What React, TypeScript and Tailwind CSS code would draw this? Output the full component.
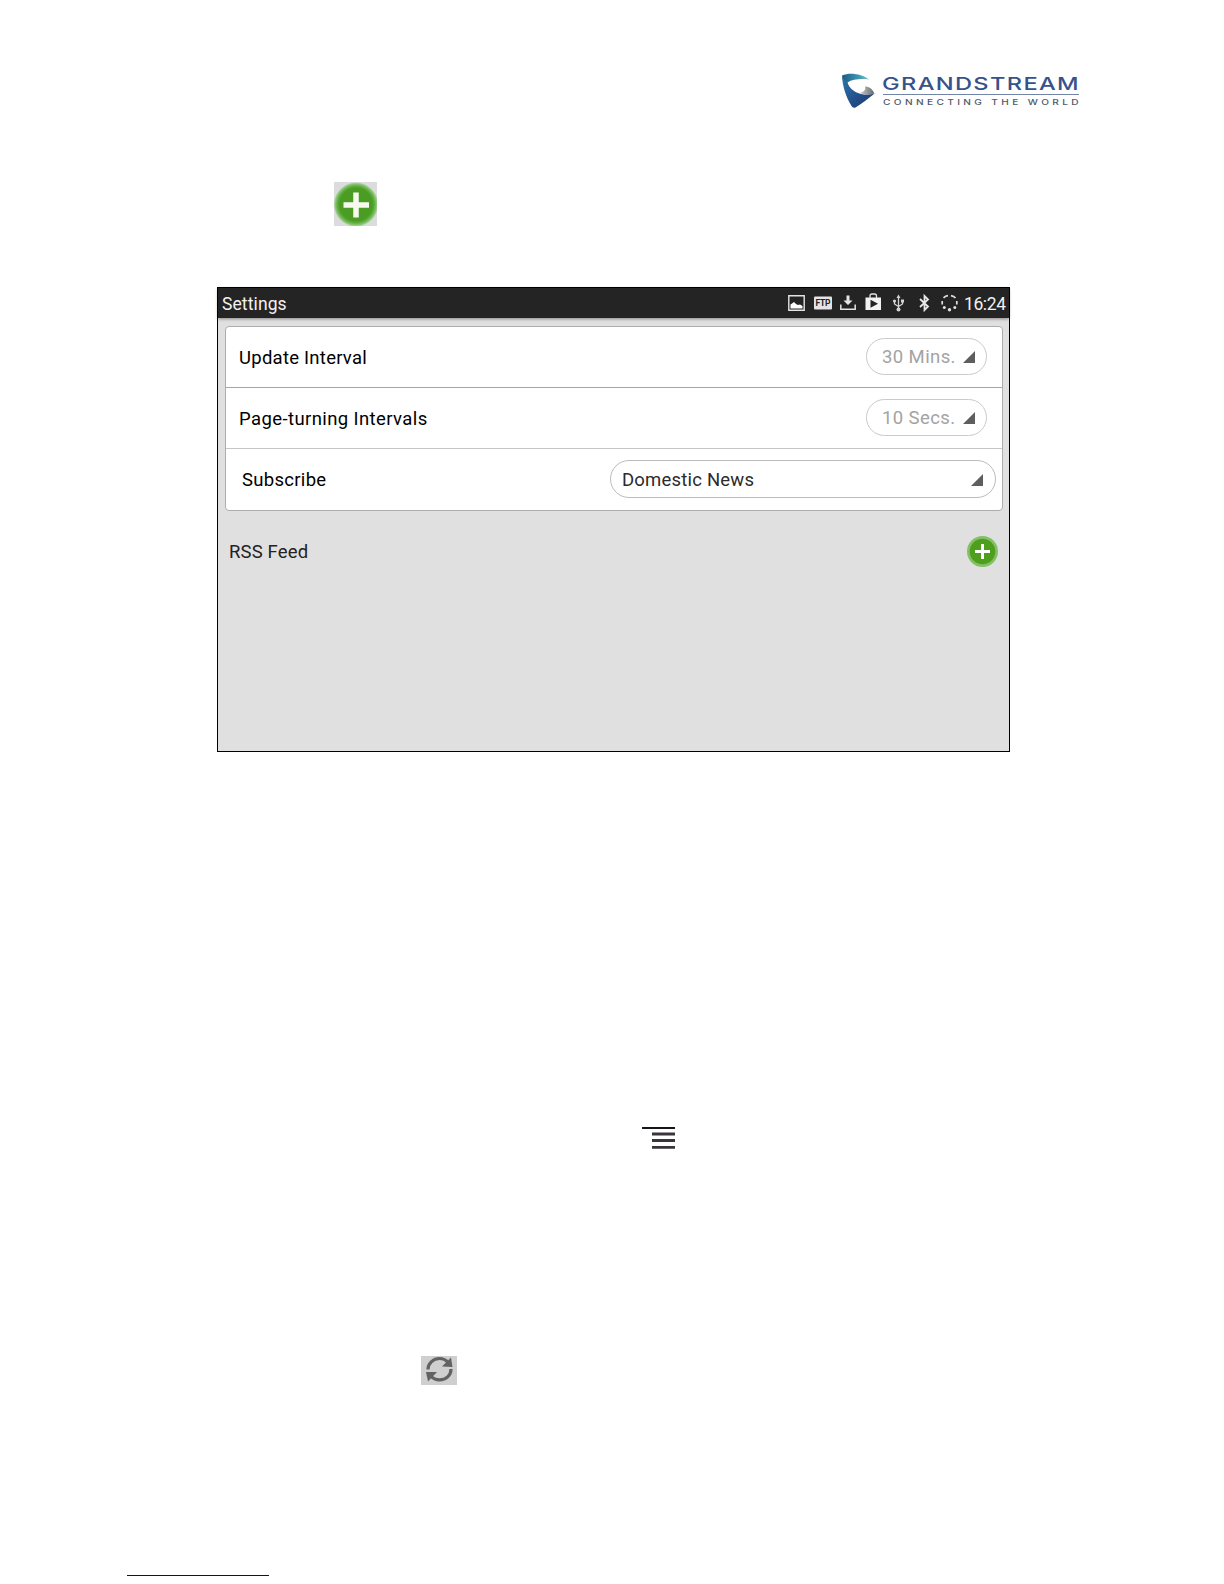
import type { ReactNode } from "react"

function Logo() {
  return (
    <svg width="246" height="50" viewBox="0 -8 246 50" aria-label="Grandstream">
      <defs>
        <linearGradient id="top" x1="0" y1="0" x2="1" y2="0">
          <stop offset="0" stopColor="#1d5a84" />
          <stop offset="0.6" stopColor="#3b97b0" />
          <stop offset="1" stopColor="#7cc0cd" />
        </linearGradient>
        <linearGradient id="body" x1="0" y1="0" x2="1" y2="1">
          <stop offset="0" stopColor="#2c78a8" />
          <stop offset="0.55" stopColor="#23508c" />
          <stop offset="1" stopColor="#1c3768" />
        </linearGradient>
        <linearGradient id="lip" x1="0" y1="0" x2="1" y2="0">
          <stop offset="0" stopColor="#c9c9c9" />
          <stop offset="1" stopColor="#66696c" />
        </linearGradient>
      </defs>
      <path d="M1 2.500C9 -1 21 1 28 6.500C20 5.500 12 6 6.500 9.500C5.500 11 6 14 8 17C4 13.500 1.500 8 1 2.500Z" fill="url(#top)" />
      <path d="M1 3C2 5 4 8 6.500 9.500C8 14.500 12 18 17 20C22 22 28 22 33.500 20.500C28 25 21 30.500 14.500 34.500C12.500 35 11.500 34.500 10.500 33C5 24 1.500 13 1 3Z" fill="url(#body)" />
      <path d="M19 20C22 19 25.500 17 24 13.500C28 13.500 31.500 16 33.500 20.500C29 22 23 22 19 20Z" fill="url(#lip)" />
      <text
        x="41" y="17" textLength="198" lengthAdjust="spacingAndGlyphs"
        className="fill-[#36528a] font-['Inter',sans-serif] text-[17.5px] font-medium tracking-[1px]"
      >
        GRANDSTREAM
      </text>
      <path d="M42 21.500H238" stroke="#7284a8" />
      <text
        x="42" y="32" textLength="199" lengthAdjust="spacingAndGlyphs"
        className="fill-[#4f5968] font-['Inter',sans-serif] text-[7.5px] font-medium tracking-[2.5px]"
      >
        CONNECTING THE WORLD
      </text>
    </svg>
  )
}

function BigPlus() {
  return (
    <svg width="43" height="44" viewBox="0 0 43 44">
      <defs>
        <radialGradient id="green">
          <stop offset="0.74" stopColor="#4b9c22" />
          <stop offset="0.84" stopColor="#61ad43" />
          <stop offset="0.94" stopColor="#8cc878" />
          <stop offset="1" stopColor="#b5d8aa" />
        </radialGradient>
      </defs>
      <path d="M0 0H43V44H0Z" fill="#dcdcde" />
      <circle cx="22" cy="22.5" r="22" fill="url(#green)" />
      <path d="M9.500 23H35M22 10.500V35.500" stroke="#f7f9ee" strokeWidth="5.500" />
    </svg>
  )
}

function SmallPlus() {
  return (
    <svg width="31" height="31" viewBox="0 0 31 31">
      <circle cx="15.5" cy="15.5" r="15.500" fill="#86bf68" />
      <circle cx="15.5" cy="15.5" r="12.800" fill="#4e9f1e" />
      <path d="M8 15.500H23M15.500 8V23" stroke="#fff" strokeWidth="3" />
    </svg>
  )
}

function MenuIcon() {
  return (
    <svg width="33" height="24" viewBox="0 0 33 24">
      <path d="M0 2H33" stroke="#17141a" strokeWidth="2" />
      <path d="M10 8H33M10 14.500H33M10 21.300H33" stroke="#39353b" strokeWidth="2.800" />
    </svg>
  )
}

function RefreshIcon() {
  return (
    <svg width="36" height="29" viewBox="0 0 36 29">
      <path d="M0 0H36V29H0Z" fill="#cfcfcf" />
      <path d="M7 13.500C7 7 12.500 2.500 18.500 2.500C22.500 2.500 25 4 27 6.500M30 13C30 19.500 25 23.800 18.500 23.800C14.500 23.800 12 22.500 10 20" fill="none" stroke="#626262" strokeWidth="3.200" />
      <path d="M30 1.500L31.500 11L21 10.500Z" fill="#626262" />
      <path d="M5 16H16L7 25.500Z" fill="#626262" />
    </svg>
  )
}

function StatusIcons() {
  return (
    <svg width="172" height="20" viewBox="0 0 172 20" fill="none">
      {/* picture */}
      <path d="M0.800 2.800H16.200V17.200H0.800Z" stroke="#e4e4e4" strokeWidth="1.400" />
      <path d="M2.500 15.500V11.500L4 10.500L6 9L8 11L10 12L12 11.500L14.500 13V15.500Z" fill="#fff" />
      {/* ftp */}
      <rect x="26" y="3.500" width="18" height="13" rx="1" fill="#e4e4e4" />
      <text x="27.5" y="13" textLength="15" className="fill-[#222] font-['Roboto',sans-serif] text-[8.5px] font-bold">FTP</text>
      {/* download */}
      <path d="M52.800 11.500V16.200H67.200V11.500" stroke="#e4e4e4" strokeWidth="1.500" />
      <path d="M58.500 2.500H61.500V7.500H64.500L60 12L55.500 7.500H58.500Z" fill="#e4e4e4" />
      {/* store */}
      <path d="M77.500 4.500H93V17H77.500Z" fill="#f2f2f2" />
      <path d="M82 5V3Q82 1 84 1H86.500Q88.500 1 88.500 3V5" stroke="#e4e4e4" strokeWidth="1.300" />
      <path d="M82.500 6.800L90 10.800L82.500 14.800Z" fill="#222" />
      {/* usb */}
      <path d="M110.500 4V16M106.500 8V11L110.500 13.500L114.500 11V8" stroke="#d4d4d4" strokeWidth="1.300" />
      <path d="M108.500 5L110.500 1.500L112.500 5Z" fill="#d4d4d4" />
      <circle cx="106.5" cy="8" r="1.600" fill="#d4d4d4" />
      <path d="M113 6.500H116V9.500H113Z" fill="#d4d4d4" />
      <circle cx="110.5" cy="16.500" r="2" fill="#d4d4d4" />
      {/* bluetooth */}
      <path d="M132 6L140 13.500L136.500 17V3L140 6.500L132 14" stroke="#e8e8e8" strokeWidth="1.800" />
      {/* sync ring */}
      <path d="M155.500 4.800Q157.500 2.800 160 2.600M163 2.600Q166 3.200 167.500 5M168.800 8V11.500M154.200 8V11.500" stroke="#dedede" strokeWidth="1.700" />
      <circle cx="156.3" cy="14.500" r="1.500" fill="#e0e0e0" />
      <circle cx="161.500" cy="16.800" r="1.700" fill="#e0e0e0" />
      <circle cx="166.800" cy="14.500" r="1.500" fill="#e0e0e0" />
    </svg>
  )
}

function Arrow() {
  return (
    <svg width="12" height="12" viewBox="0 0 12 12">
      <path d="M12 0V12H0Z" fill="#5e5e5e" />
    </svg>
  )
}

function SmallSelect({ children }: { children: ReactNode }) {
  return (
    <button className="mr-[15px] mb-0.5 flex h-[37px] w-[121px] items-center justify-between rounded-full border border-[#cacaca] pr-[11px] pl-[15px] text-[#a3a3a3]">
      <span className="pt-1 tracking-[0.4px] whitespace-nowrap">{children}</span>
      <span className="pt-0.5">
        <Arrow />
      </span>
    </button>
  )
}

export default function App() {
  return (
    <main className="flex h-[1584px] w-[1224px] flex-col overflow-hidden bg-white font-['Roboto',sans-serif] text-[18.5px] text-black [&_svg]:block">
      <header className="mt-[65px] ml-[841px] h-[50px]">
        <Logo />
      </header>
      <div className="mt-[67px] ml-[334px] h-11">
        <BigPlus />
      </div>

      <section className="mt-[61px] ml-[217px] h-[465px] w-[793px] border border-black bg-[#e0e0e0]">
        <div className="flex h-[30px] items-center bg-[#242424] pr-[3px] pl-1 text-[#f2f2f2] shadow-[0_1px_3px_rgba(0,0,0,0.4)]">
          <h1 className="pt-[3px] text-[17.5px] tracking-[0.1px]">Settings</h1>
          <div className="ml-auto flex items-center">
            <StatusIcons />
            <time className="ml-1 w-[42px] pt-0.5 text-[17.5px] tracking-[-0.4px]">16:24</time>
          </div>
        </div>

        <div className="mt-2 ml-[7px] h-[185px] w-[778px] rounded border border-[#adadad] bg-white">
          <div className="flex h-[61px] items-center justify-between border-b border-[#a5a5a5] pl-[13px]">
            <span className="pt-[3px] tracking-[0.25px]">Update Interval</span>
            <SmallSelect>30 Mins.</SmallSelect>
          </div>
          <div className="flex h-[61px] items-center justify-between border-b border-[#c6c6c6] pl-[13px]">
            <span className="pt-[3px] tracking-[0.4px]">Page-turning Intervals</span>
            <SmallSelect>10 Secs.</SmallSelect>
          </div>
          <div className="flex h-[61px] items-center justify-between pr-1.5 pl-4">
            <span className="pt-0.5 tracking-[0.3px]">Subscribe</span>
            <button className="mb-0.5 flex h-[38px] w-[386px] items-center justify-between rounded-full border border-[#bcbcbc] pr-3 pl-[11px] text-[#2b2b2b]">
              <span className="pt-1 tracking-[0.2px]">Domestic News</span>
              <span className="pt-0.5">
                <Arrow />
              </span>
            </button>
          </div>
        </div>

        <div className="mt-[25px] flex h-[31px] items-center justify-between pr-[11px] pl-[11px]">
          <h2 className="pt-0.5 tracking-[0.15px] text-[#222]">RSS Feed</h2>
          <SmallPlus />
        </div>
      </section>

      <div className="mt-[374px] ml-[642px] h-6">
        <MenuIcon />
      </div>
      <div className="mt-[206px] ml-[421px] h-[29px]">
        <RefreshIcon />
      </div>
      <div className="mt-[190px] ml-[127px] h-px w-[142px] bg-[#090978]" />
    </main>
  )
}
